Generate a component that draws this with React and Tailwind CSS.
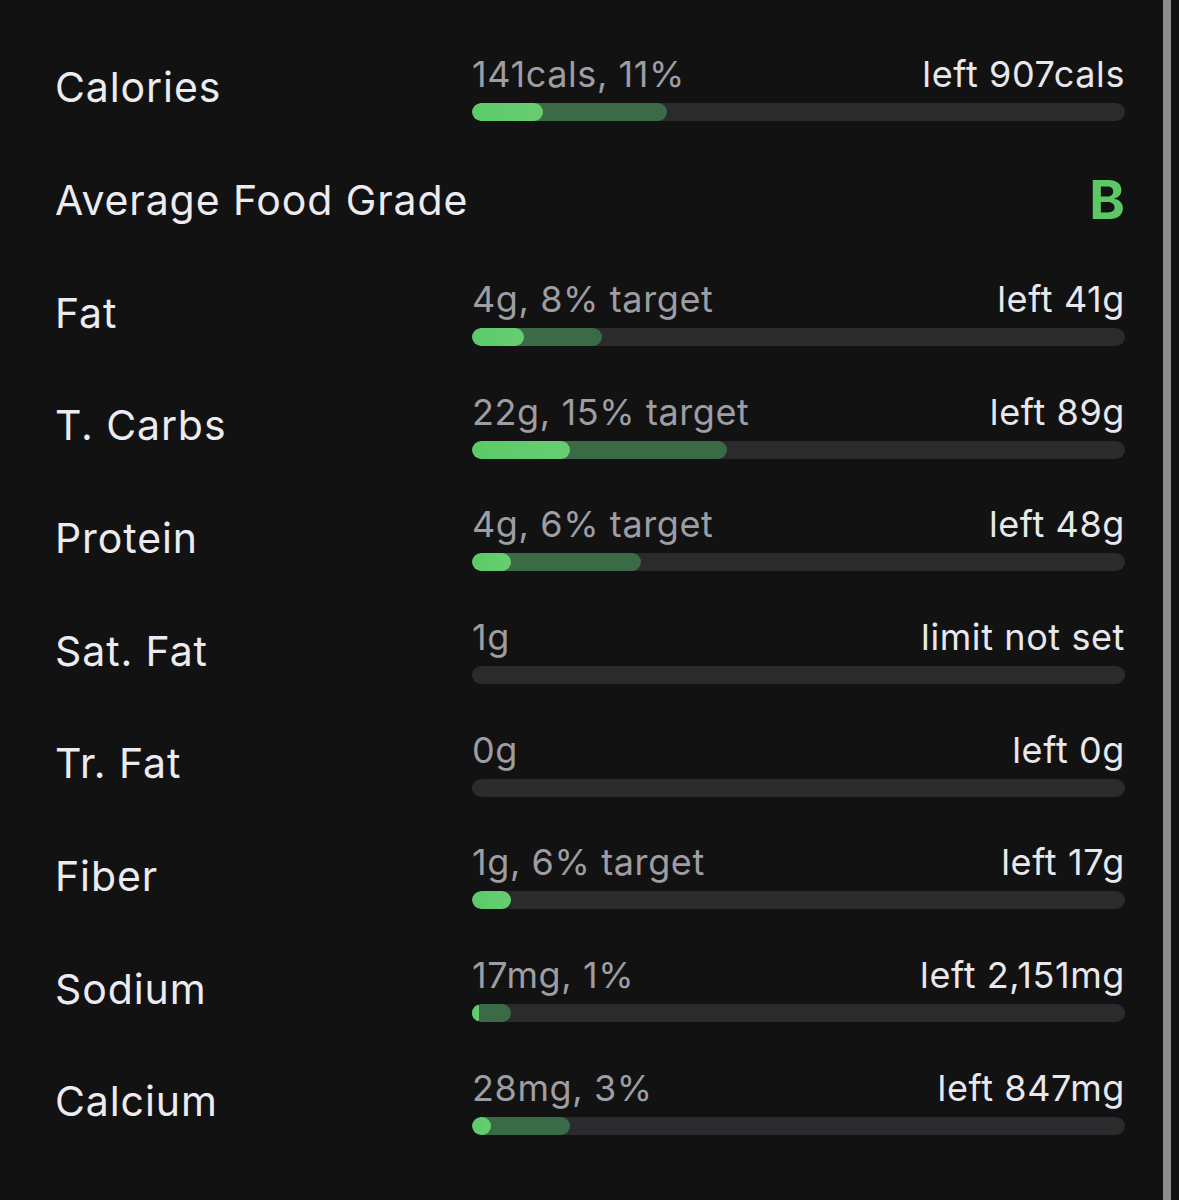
import React from "react";

const rows = [
  { label: "Calories", left: "141cals, 11%", right: "left 907cals", light: 71, dark: 195 },
  { label: "Average Food Grade", grade: "B" },
  { label: "Fat", left: "4g, 8% target", right: "left 41g", light: 52, dark: 130 },
  { label: "T. Carbs", left: "22g, 15% target", right: "left 89g", light: 98, dark: 255 },
  { label: "Protein", left: "4g, 6% target", right: "left 48g", light: 39, dark: 169 },
  { label: "Sat. Fat", left: "1g", right: "limit not set", light: 0, dark: 0 },
  { label: "Tr. Fat", left: "0g", right: "left 0g", light: 0, dark: 0 },
  { label: "Fiber", left: "1g, 6% target", right: "left 17g", light: 39, dark: 0 },
  { label: "Sodium", left: "17mg, 1%", right: "left 2,151mg", light: 7, dark: 39 },
  { label: "Calcium", left: "28mg, 3%", right: "left 847mg", light: 19, dark: 98 },
];

function Row({ r }) {
  return (
    <div className="flex h-[112.67px] items-center">
      <div className="w-[417px] shrink-0 whitespace-nowrap text-[41px] leading-[48px] tracking-[0.9px] text-[#ebebf0]">
        {r.label}
      </div>
      {r.grade ? (
        <div className="flex w-[653px] justify-end text-[54px] font-bold leading-[56px] text-[#5bc863]">
          {r.grade}
        </div>
      ) : (
        <div className="flex w-[653px] flex-col">
          <div className="flex h-[40px] items-center justify-between whitespace-nowrap text-[36px] leading-[40px] tracking-[0.6px]">
            <span className="text-[#9d9da2]">{r.left}</span>
            <span className="text-[#e8e8ec]">{r.right}</span>
          </div>
          <div className="relative mt-[9px] h-[18px] w-full overflow-hidden rounded-full bg-[#2b2b2d]">
            {r.dark > 0 && (
              <div
                className="absolute left-0 top-0 h-full rounded-full bg-[#3a6b46]"
                style={{ width: r.dark }}
              />
            )}
            {r.light > 0 && (
              <div
                className="absolute left-0 top-0 h-full rounded-full bg-gradient-to-r from-[#5acb68] to-[#68cd72]"
                style={{ width: r.light }}
              />
            )}
          </div>
        </div>
      )}
    </div>
  );
}

export default function App() {
  return (
    <div className="flex h-[1200px] w-[1179px] bg-[#121212] font-['Inter',sans-serif]">
      <div className="w-[1163px] pl-[55px] pt-[31px]">
        {rows.map((r) => (
          <Row key={r.label} r={r} />
        ))}
      </div>
      <div className="w-[8px] bg-[#8c8c8c]" />
      <div className="w-[8px] bg-[#121212]" />
    </div>
  );
}
